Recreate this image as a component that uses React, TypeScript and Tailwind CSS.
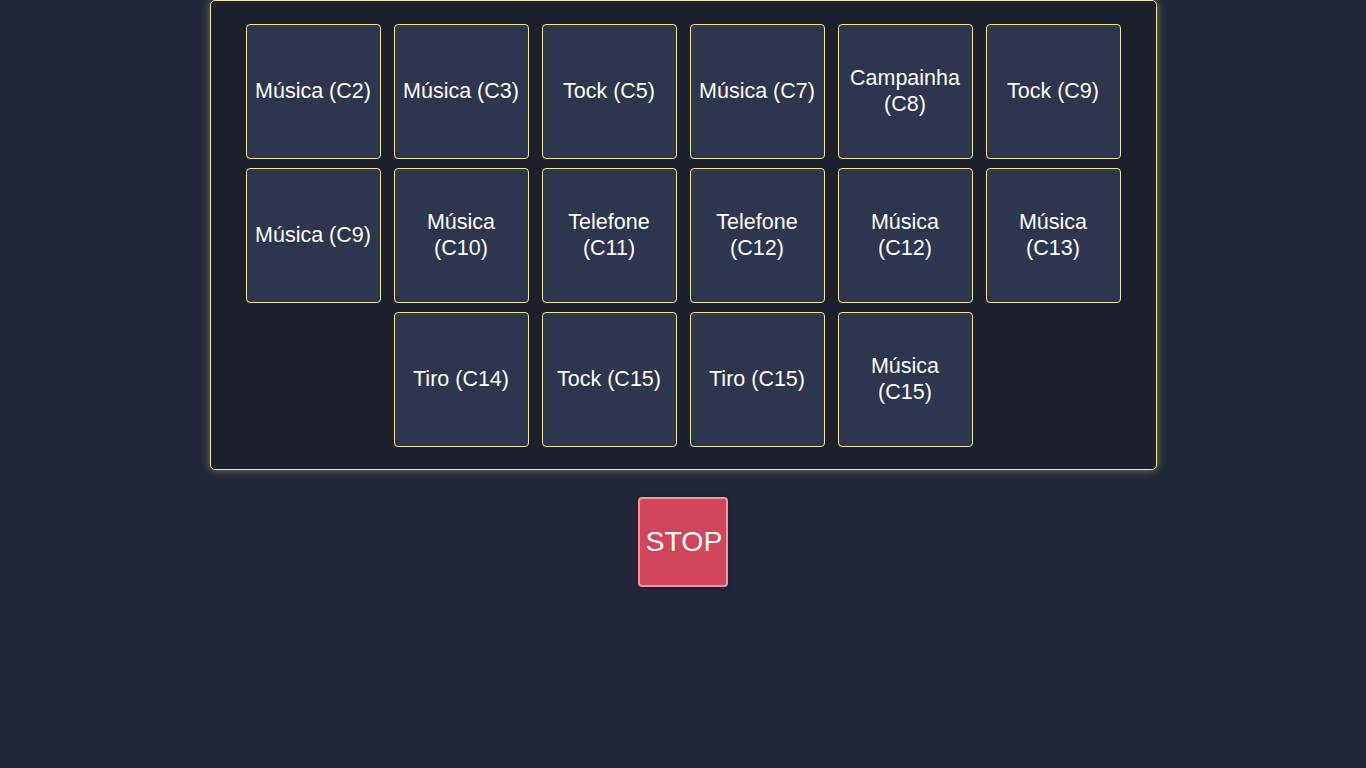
import React from 'react';

const sounds = [
    'Música (C2)', 'Música (C3)', 'Tock (C5)', 'Música (C7)', 'Campainha (C8)', 'Tock (C9)',
    'Música (C9)', 'Música (C10)', 'Telefone (C11)', 'Telefone (C12)', 'Música (C12)', 'Música (C13)',
    'Tiro (C14)', 'Tock (C15)', 'Tiro (C15)', 'Música (C15)',
];

export default function App() {
    return (
        <div className="min-h-screen bg-[#222639] text-white font-['Liberation_Sans',Arial,sans-serif] flex flex-col items-center">
            <div className="w-[947px] bg-[#1c1f2e] border border-[#f3e98f] rounded-[5px] shadow-[0_0_9px_rgba(240,230,140,0.45)] px-[35px] pt-[23px] pb-[22px] flex flex-wrap justify-center gap-x-[13px] gap-y-[9px]">
                {sounds.map((s, i) => (
                    <button
                        key={i}
                        className="w-[135px] h-[135px] bg-[#2e354e] border border-[#f3e98f] rounded-[4px] flex items-center justify-center text-center text-[21.5px] leading-[25.5px] px-1 text-white"
                    >
                        {s}
                    </button>
                ))}
            </div>
            <button className="mt-[27px] w-[90px] h-[90px] bg-[#d0455a] border-2 border-[#ef98a4] rounded-[4px] text-[28.5px] text-white flex items-center justify-center pb-[2px] pl-[2px] shadow-[0_0_4px_rgba(0,0,0,0.3)]">
                STOP
            </button>
        </div>
    );
}
